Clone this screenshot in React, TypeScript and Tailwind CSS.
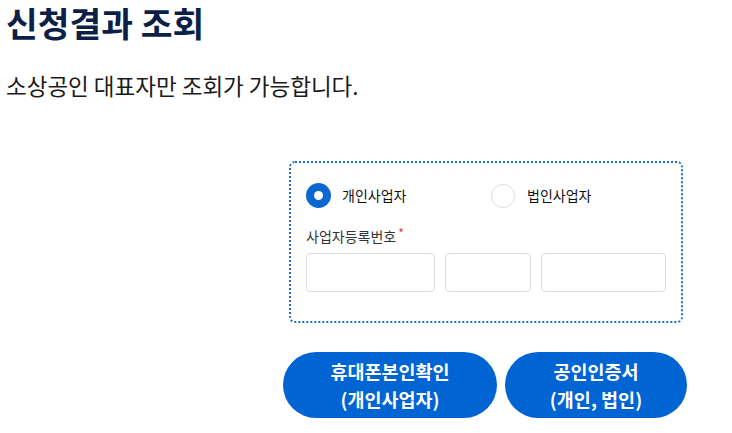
export default function App() {
  const font = { fontFamily: '"Noto Sans CJK KR", "Noto Sans", sans-serif' };

  return (
    <div className="min-h-[433px] w-[732px] bg-white text-[#111]" style={font}>
      <h1 className="pl-[6px] text-[34.5px] font-bold leading-[44px] text-[#0c1f47]">신청결과 조회</h1>
      <p className="mt-[26px] pl-[6px] text-[22.5px] leading-[30px] text-[#1b1b1b]">소상공인 대표자만 조회가 가능합니다.</p>

      <div className="ml-[283px] mt-[61px] w-[404px]">
        {/* form box */}
        <div className="ml-[6px] w-[394px] rounded-[6px] border-2 border-dotted border-[#1a6fc9] px-[15px] pb-[29px] pt-[20px]">
          <div className="flex items-center">
            <label className="flex w-[185px] items-center gap-[11px]">
              <span className="flex h-[25px] w-[25px] items-center justify-center rounded-full bg-[#0a68d0]">
                <span className="h-[9px] w-[9px] rounded-full bg-white" />
              </span>
              <span className="text-[14px] text-[#111]">개인사업자</span>
            </label>
            <label className="flex items-center gap-[12px]">
              <span className="h-[24px] w-[24px] rounded-full border border-[#dcdcdc] bg-white" />
              <span className="text-[14px] text-[#111]">법인사업자</span>
            </label>
          </div>

          <div className="mt-[17px] flex items-start text-[14px] leading-[22px] text-[#333]">
            사업자등록번호
            <span className="ml-[2px] text-[12px] leading-[16px] text-[#e0393e]">*</span>
          </div>

          <div className="mt-[6px] flex gap-[10px]">
            <input className="h-[39px] w-[129px] rounded-[4px] border border-[#dddddd] bg-white outline-none" />
            <input className="h-[39px] w-[86px] rounded-[4px] border border-[#dddddd] bg-white outline-none" />
            <input className="h-[39px] w-[125px] rounded-[4px] border border-[#dddddd] bg-white outline-none" />
          </div>
        </div>

        {/* buttons */}
        <div className="mt-[29px] flex gap-[8px]">
          <button className="flex h-[66px] w-[214px] flex-col items-center justify-center rounded-full bg-[#0064d2] text-[18.5px] font-bold leading-[28px] text-white">
            <span>휴대폰본인확인</span>
            <span>(개인사업자)</span>
          </button>
          <button className="flex h-[66px] w-[182px] flex-col items-center justify-center rounded-full bg-[#0064d2] text-[18.5px] font-bold leading-[28px] text-white">
            <span>공인인증서</span>
            <span>(개인, 법인)</span>
          </button>
        </div>
      </div>
    </div>
  );
}
